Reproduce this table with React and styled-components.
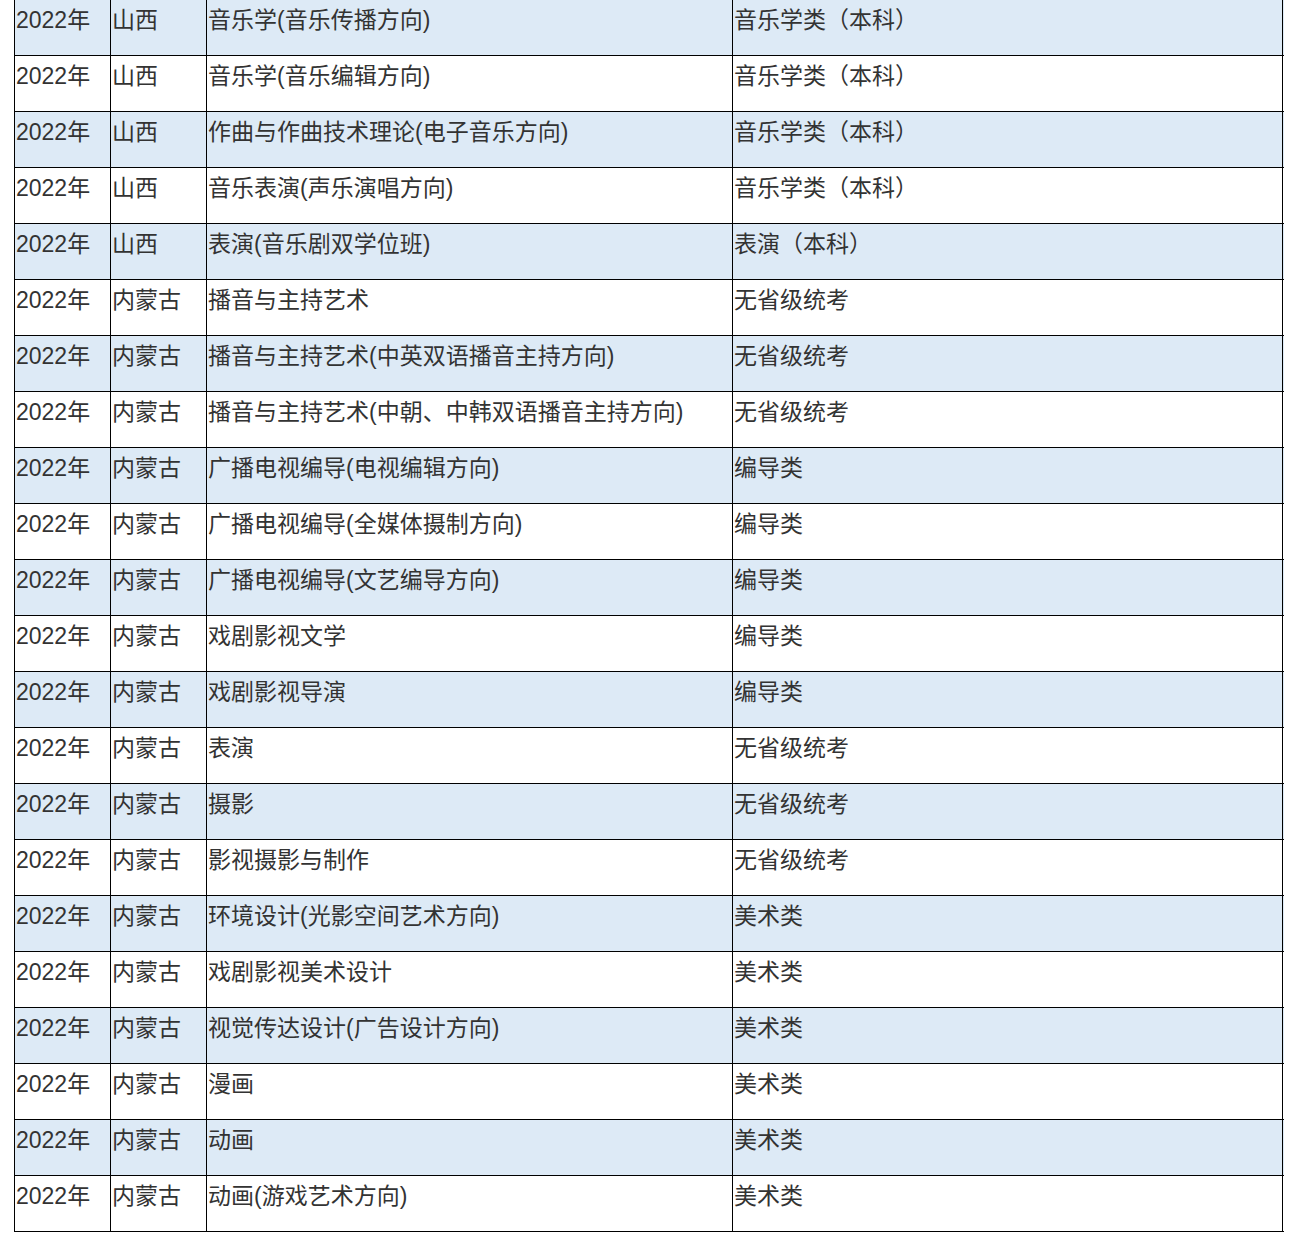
import React from "react"
import styled, { createGlobalStyle } from "styled-components"

const GlobalStyle = createGlobalStyle`
  html, body {
    margin: 0;
    padding: 0;
    background: #fff;
  }
  body {
    font-family: "Liberation Sans", "Noto Sans CJK SC", sans-serif;
  }
`

const Table = styled.div`
  margin-left: 14px;
  width: 1269px;
  border-left: 1px solid #000;
`

const Row = styled.div`
  display: grid;
  grid-template-columns: 96px 96px 526px 550px;
  height: 56px;
  box-sizing: border-box;
  border-bottom: 1px solid #000;
  background: ${(p) => (p.$shaded ? "#ddeaf6" : "#fff")};
`

const Cell = styled.div`
  box-sizing: border-box;
  border-right: 1px solid #000;
  padding: 7px 0 0 1px;
  font-size: 23px;
  line-height: 26px;
  color: #333;
  white-space: nowrap;
  overflow: hidden;
`

const rows = [
  ["山西", "音乐学(音乐传播方向)", "音乐学类（本科）"],
  ["山西", "音乐学(音乐编辑方向)", "音乐学类（本科）"],
  ["山西", "作曲与作曲技术理论(电子音乐方向)", "音乐学类（本科）"],
  ["山西", "音乐表演(声乐演唱方向)", "音乐学类（本科）"],
  ["山西", "表演(音乐剧双学位班)", "表演（本科）"],
  ["内蒙古", "播音与主持艺术", "无省级统考"],
  ["内蒙古", "播音与主持艺术(中英双语播音主持方向)", "无省级统考"],
  ["内蒙古", "播音与主持艺术(中朝、中韩双语播音主持方向)", "无省级统考"],
  ["内蒙古", "广播电视编导(电视编辑方向)", "编导类"],
  ["内蒙古", "广播电视编导(全媒体摄制方向)", "编导类"],
  ["内蒙古", "广播电视编导(文艺编导方向)", "编导类"],
  ["内蒙古", "戏剧影视文学", "编导类"],
  ["内蒙古", "戏剧影视导演", "编导类"],
  ["内蒙古", "表演", "无省级统考"],
  ["内蒙古", "摄影", "无省级统考"],
  ["内蒙古", "影视摄影与制作", "无省级统考"],
  ["内蒙古", "环境设计(光影空间艺术方向)", "美术类"],
  ["内蒙古", "戏剧影视美术设计", "美术类"],
  ["内蒙古", "视觉传达设计(广告设计方向)", "美术类"],
  ["内蒙古", "漫画", "美术类"],
  ["内蒙古", "动画", "美术类"],
  ["内蒙古", "动画(游戏艺术方向)", "美术类"],
]

export default function App() {
  return (
    <>
      <GlobalStyle />
      <Table>
        {rows.map(([province, major, category], i) => (
          <Row key={i} $shaded={i % 2 === 0}>
            <Cell>2022年</Cell>
            <Cell>{province}</Cell>
            <Cell>{major}</Cell>
            <Cell>{category}</Cell>
          </Row>
        ))}
      </Table>
    </>
  )
}
